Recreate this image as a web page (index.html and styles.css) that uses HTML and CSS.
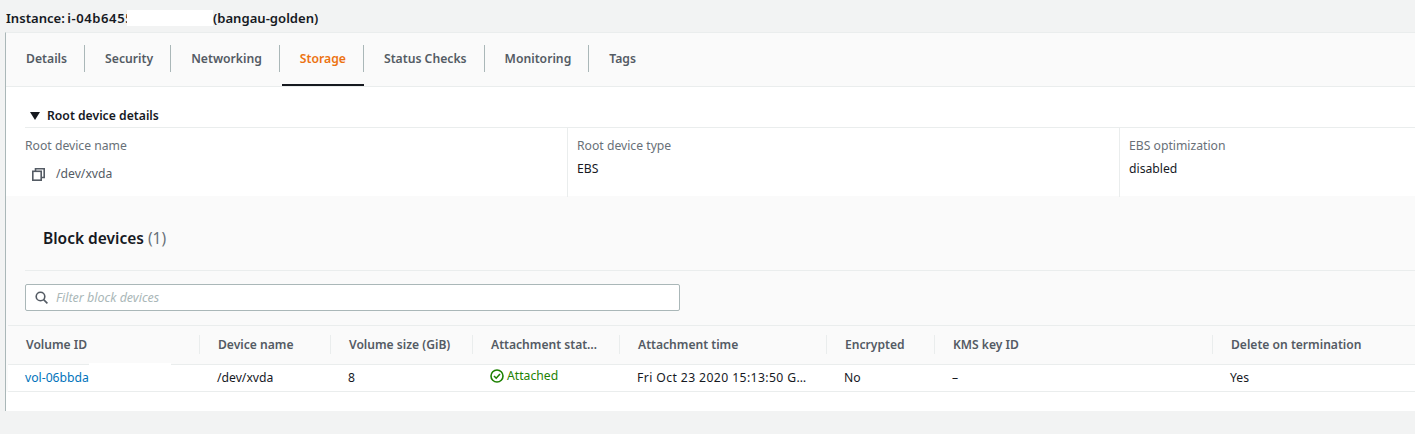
FILE: index.html
```html
<!DOCTYPE html>
<html>
<head>
<meta http-equiv="Content-Type" content="text/html; charset=utf-8"/>
<title>Instance storage</title>
<link rel="stylesheet" href="styles.css">
</head>
<body>

<div class="instance-title">
  <span class="title-id">Instance: <span class="id-part">i-04b6455</span></span><span class="mask mask-id"></span><span>(bangau-golden)</span>
</div>

<div class="panel">
  <div class="tabs">
    <div class="tab"><span class="tab-label">Details</span></div>
    <div class="tab"><span class="tab-label">Security</span></div>
    <div class="tab"><span class="tab-label">Networking</span></div>
    <div class="tab tab-active"><span class="tab-label">Storage</span></div>
    <div class="tab"><span class="tab-label">Status Checks</span></div>
    <div class="tab"><span class="tab-label">Monitoring</span></div>
    <div class="tab"><span class="tab-label tab-last">Tags</span></div>
  </div>

  <div class="root-section">
    <div class="root-heading">
      <svg class="caret" width="10" height="8" viewBox="0 0 10 8"><path d="M0 0h10L5 8z" fill="#16191f"/></svg>
      <span>Root device details</span>
    </div>
    <div class="root-grid">
      <div class="root-col">
        <div class="field-label">Root device name</div>
        <div class="field-copy">
          <svg width="13" height="13" viewBox="0 0 13 13" fill="none" stroke="#545b64" stroke-width="1.6"><rect x="0.8" y="3.3" width="8.4" height="8.9"/><path d="M3.5 3V0.8h8.7v8.7H9.5"/></svg>
          <span>/dev/xvda</span>
        </div>
      </div>
      <div class="root-col root-col-next">
        <div class="field-label">Root device type</div>
        <div class="field-value">EBS</div>
      </div>
      <div class="root-col root-col-next">
        <div class="field-label">EBS optimization</div>
        <div class="field-value">disabled</div>
      </div>
    </div>
  </div>

  <div class="block-section">
    <div class="block-heading">Block devices <span class="block-count">(1)</span></div>
    <div class="filter-wrap">
      <div class="filter">
        <svg width="13" height="13" viewBox="0 0 13 13" fill="none" stroke="#545b64" stroke-width="1.6"><circle cx="5.5" cy="5.5" r="4.3"/><path d="M8.6 8.6L12.4 12.4"/></svg>
        <span>Filter block devices</span>
      </div>
    </div>

    <table class="devices">
      <colgroup>
        <col class="c-id"><col class="c-device"><col class="c-size"><col class="c-status">
        <col class="c-time"><col class="c-enc"><col class="c-kms"><col class="c-del">
      </colgroup>
      <thead>
        <tr>
          <th><span class="th-in">Volume ID</span></th>
          <th><span class="th-in">Device name</span></th>
          <th><span class="th-in">Volume size (GiB)</span></th>
          <th><span class="th-in">Attachment stat…</span></th>
          <th><span class="th-in">Attachment time</span></th>
          <th><span class="th-in">Encrypted</span></th>
          <th><span class="th-in">KMS key ID</span></th>
          <th><span class="th-in th-last">Delete on termination</span></th>
        </tr>
      </thead>
      <tbody>
        <tr>
          <td class="td-id"><a class="vol-link" href="#">vol-06bbda</a><span class="mask mask-vol"></span></td>
          <td>/dev/xvda</td>
          <td>8</td>
          <td>
            <span class="status">
              <svg width="14" height="14" viewBox="0 0 14 14" fill="none" stroke="#1d8102" stroke-width="1.6"><circle cx="7" cy="7" r="6"/><path d="M4 7l2.2 2.2L10 5"/></svg>
              Attached
            </span>
          </td>
          <td class="td-time">Fri Oct 23 2020 15:13:50 G…</td>
          <td>No</td>
          <td>–</td>
          <td>Yes</td>
        </tr>
      </tbody>
    </table>
    <div class="table-foot"></div>
  </div>
</div>

</body>
</html>
```

FILE: styles.css
```css
body {
  margin: 0;
  height: 434px;
  overflow: hidden;
  background-color: #f2f3f3;
  font-family: "Noto Sans", "Open Sans", sans-serif;
  font-size: 12.2px;
  color: #16191f;
}

.instance-title {
  display: flex;
  align-items: center;
  height: 32px;
  padding: 4px 0 0 6px;
  box-sizing: border-box;
  font-size: 13.1px;
  font-weight: 600;
  white-space: nowrap;
}

.title-id {
  width: 121px;
  word-spacing: -1px;
}

.id-part {
  letter-spacing: 0.55px;
}

.mask {
  display: block;
  background-color: #fff;
}

/* white-out over the rest of the instance id */
.mask-id {
  width: 86px;
  height: 16px;
}

.panel {
  margin-left: 5px;
  border-left: 1px solid #aab7b8;
  border-top: 1px solid #eaeded;
  background-color: #fff;
}

/* tabs */
.tabs {
  display: flex;
  gap: 2px;
  height: 54px;
  box-sizing: border-box;
  padding-left: 2px;
  background-color: #fafafa;
  border-bottom: 1px solid #eaeded;
}

.tab {
  display: flex;
  align-items: center;
  height: 53px;
  box-sizing: border-box;
  border-bottom: 2px solid transparent;
  font-weight: 600;
  color: #545b64;
}

.tab-label {
  padding: 0 17px 0 18px;
  line-height: 27px;
  border-right: 1px solid #aab7b8;
}

.tab-last {
  border-right: none;
}

.tab-active {
  border-bottom-color: #16191f;
  color: #ec7211;
}

/* root device */
.root-section {
  height: 109px;
  box-sizing: border-box;
  padding: 17px 0 0 19px;
}

.root-heading {
  display: flex;
  align-items: center;
  gap: 7px;
  height: 23px;
  padding-left: 5px;
  font-weight: 600;
}

.root-grid {
  display: grid;
  grid-template-columns: 542px 552px 1fr;
  height: 69px;
  border-top: 1px solid #eaeded;
}

.root-col-next {
  padding-left: 9px;
  border-left: 1px solid #eaeded;
}

.field-label {
  margin-top: 9px;
  line-height: 18px;
  color: #687078;
}

.field-value {
  margin-top: 5px;
  line-height: 18px;
}

.field-copy {
  display: flex;
  align-items: center;
  gap: 11px;
  margin: 10px 0 0 7px;
  line-height: 18px;
  color: #545b64;
}

/* block devices */
.block-section {
  background-color: #fafafa;
}

.block-heading {
  height: 75px;
  margin-left: 19px;
  padding: 32px 0 0 18px;
  box-sizing: border-box;
  border-bottom: 1px solid #eaeded;
  line-height: 21px;
  font-size: 15.5px;
  font-weight: 600;
}

.block-count {
  font-weight: 400;
  color: #687078;
}

.filter-wrap {
  height: 54px;
  box-sizing: border-box;
  padding: 13px 0 0 19px;
}

.filter {
  display: flex;
  align-items: center;
  gap: 8px;
  width: 655px;
  height: 27px;
  box-sizing: border-box;
  padding-left: 9px;
  background-color: #fff;
  border: 1px solid #aab7b8;
  border-radius: 2px;
  font-size: 12.5px;
  font-style: italic;
  color: #aab7b8;
}

.devices {
  table-layout: fixed;
  border-collapse: collapse;
  width: 1407px;
  margin-left: 2px;
}

.c-id { width: 192px; }
.c-device { width: 131px; }
.c-size { width: 142px; }
.c-status { width: 147px; }
.c-time { width: 207px; }
.c-enc { width: 108px; }
.c-kms { width: 278px; }

.devices th {
  height: 39px;
  padding: 0 0 2px;
  box-sizing: border-box;
  text-align: left;
  font-size: 12.1px;
  font-weight: 600;
  color: #545b64;
  background-color: #fafafa;
  border-top: 1px solid #eaeded;
  border-bottom: 1px solid #eaeded;
}

.th-in {
  display: block;
  height: 19px;
  padding-left: 18px;
  line-height: 19px;
  border-right: 1px solid #eaeded;
  white-space: nowrap;
}

.th-last {
  border-right: none;
}

.devices td {
  height: 24px;
  padding: 0 0 2px 17px;
  background-color: #fff;
  border-bottom: 1px solid #eaeded;
  white-space: nowrap;
}

.devices .td-id {
  position: relative;
}

.devices .td-time {
  letter-spacing: 0.4px;
}

.vol-link {
  color: #0073bb;
  text-decoration: none;
}

/* white-out over the volume id, it sticks up over the header line */
.mask-vol {
  position: absolute;
  left: 81px;
  top: -2px;
  width: 82px;
  height: 28px;
}

.status {
  display: flex;
  align-items: center;
  gap: 3px;
  margin-top: -3px;
  color: #1d8102;
}

.table-foot {
  height: 19px;
  background-color: #fff;
}
```
